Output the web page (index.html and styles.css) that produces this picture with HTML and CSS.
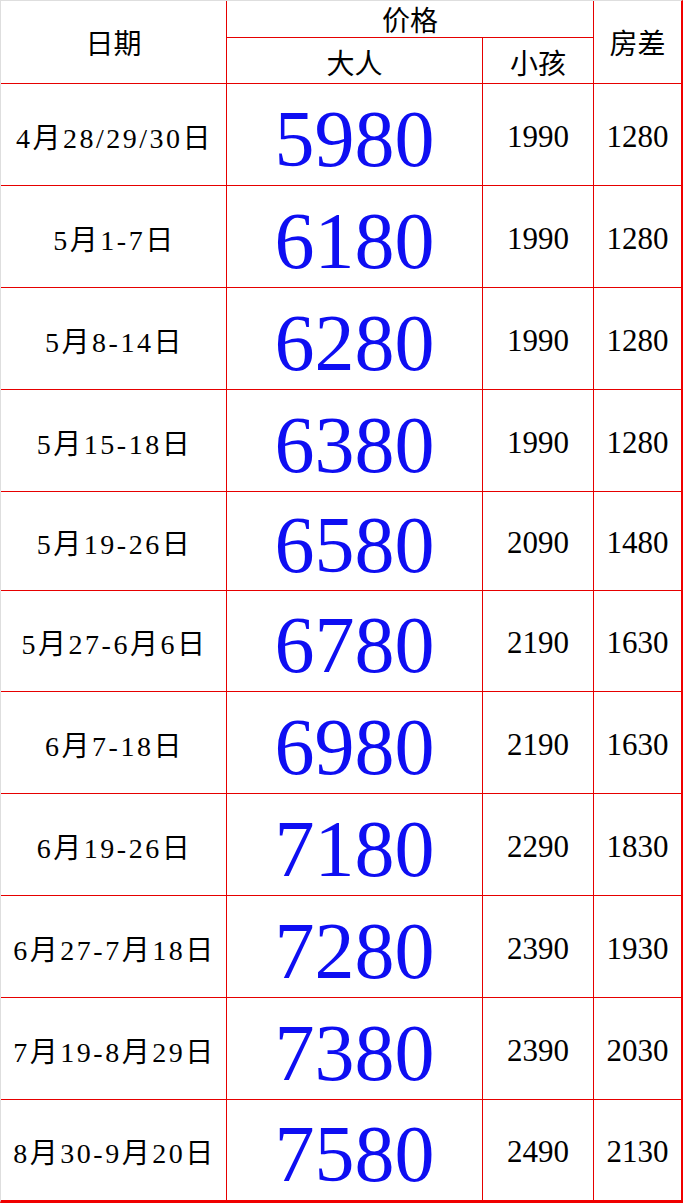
FILE: index.html
```html
<!DOCTYPE html>
<html lang="zh">
<head>
<meta charset="utf-8">
<title>价格表</title>
<link rel="stylesheet" href="styles.css">
</head>
<body>
<div class="sheet">
  <div class="cell head hd-date">日期</div>
  <div class="cell head hd-price">价格</div>
  <div class="cell head hd-room">房差</div>
  <div class="cell head hd-sub">大人</div>
  <div class="cell head hd-sub">小孩</div>

  <div class="cell date">4月28/29/30日</div><div class="cell adult">5980</div><div class="cell num">1990</div><div class="cell num">1280</div>
  <div class="cell date">5月1-7日</div><div class="cell adult">6180</div><div class="cell num">1990</div><div class="cell num">1280</div>
  <div class="cell date">5月8-14日</div><div class="cell adult">6280</div><div class="cell num">1990</div><div class="cell num">1280</div>
  <div class="cell date">5月15-18日</div><div class="cell adult">6380</div><div class="cell num">1990</div><div class="cell num">1280</div>
  <div class="cell date">5月19-26日</div><div class="cell adult">6580</div><div class="cell num">2090</div><div class="cell num">1480</div>
  <div class="cell date">5月27-6月6日</div><div class="cell adult">6780</div><div class="cell num">2190</div><div class="cell num">1630</div>
  <div class="cell date">6月7-18日</div><div class="cell adult">6980</div><div class="cell num">2190</div><div class="cell num">1630</div>
  <div class="cell date">6月19-26日</div><div class="cell adult">7180</div><div class="cell num">2290</div><div class="cell num">1830</div>
  <div class="cell date">6月27-7月18日</div><div class="cell adult">7280</div><div class="cell num">2390</div><div class="cell num">1930</div>
  <div class="cell date">7月19-8月29日</div><div class="cell adult">7380</div><div class="cell num">2390</div><div class="cell num">2030</div>
  <div class="cell date">8月30-9月20日</div><div class="cell adult">7580</div><div class="cell num">2490</div><div class="cell num">2130</div>
</div>
</body>
</html>
```

FILE: styles.css
```css
html, body {
  margin: 0;
  padding: 0;
  background: #ffffff;
}

.sheet {
  width: 683px;
  box-sizing: border-box;
  display: grid;
  grid-template-columns: 225px 255px 110px 87px;
  grid-template-rows: 36px 45px 101px 101px 101px 101px 98px 100px 101px 101px 101px 101px 100px;
  gap: 1px;
  background: #e60000;
  border-top: 1px solid #dedede;
  border-left: 1px solid #dedede;
  border-right: 2px solid #f00000;
  border-bottom: 3px solid #f00000;
  font-family: "Liberation Serif", "Noto Sans CJK SC", serif;
  color: #000;
}

.cell {
  background: #ffffff;
  display: flex;
  align-items: center;
  justify-content: center;
  white-space: nowrap;
}

.head {
  font-size: 28px;
  line-height: 1;
}

.hd-date {
  grid-column: 1;
  grid-row: 1 / 3;
  padding-top: 5px;
}

.hd-price {
  grid-column: 2 / 4;
  grid-row: 1;
  padding-top: 5px;
}

.hd-room {
  grid-column: 4;
  grid-row: 1 / 3;
  padding-top: 5px;
}

.hd-sub {
  padding-top: 8px;
}

.date {
  font-size: 28px;
  letter-spacing: 2.5px;
  padding-top: 2px;
  padding-left: 2px;
}

.adult {
  font-size: 80px;
  line-height: 1;
  color: #0e0ef2;
  padding-top: 8px;
}

.num {
  font-size: 31px;
  padding-top: 4px;
}
```
